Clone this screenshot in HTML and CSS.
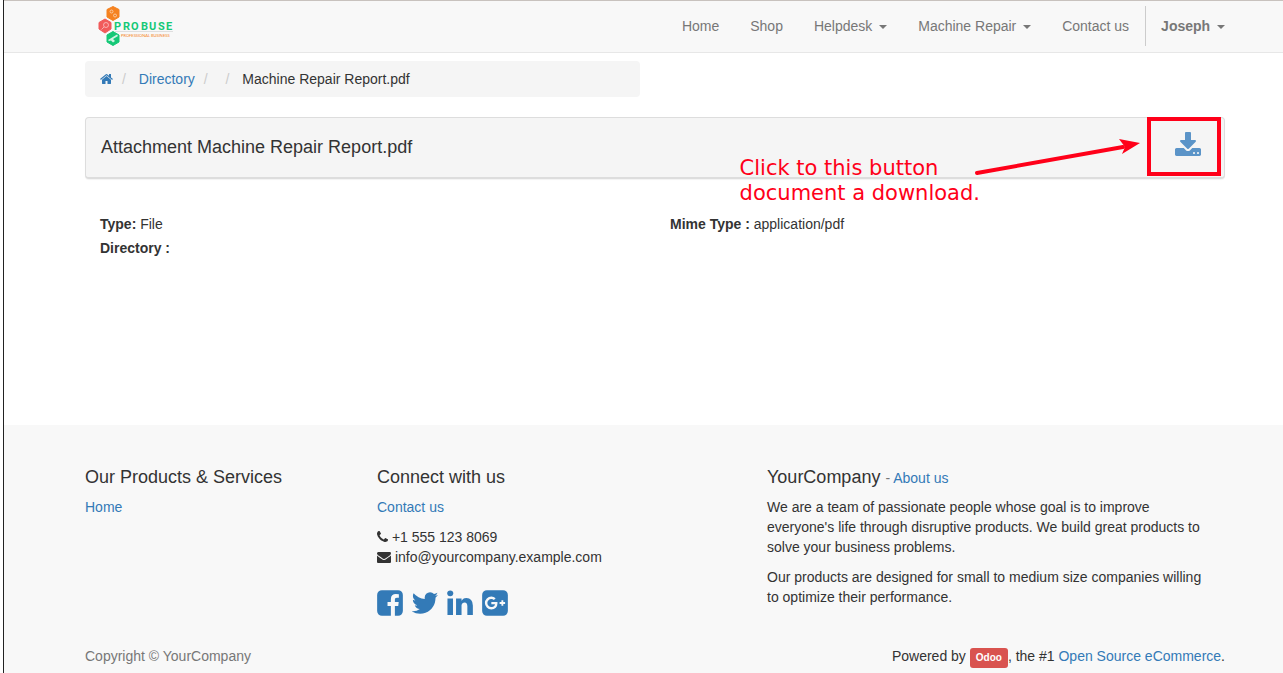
FILE: index.html
```html
<!DOCTYPE html>
<html lang="en">
<head>
<meta charset="utf-8">
<title>Machine Repair Report.pdf</title>
<link rel="stylesheet" href="styles.css">
</head>
<body>
<div class="page">
  <header class="navbar">
    <a class="brand" href="#" aria-label="Probuse">
      <svg class="logo" width="76" height="42" viewBox="0 0 76 42">
        <path fill="#f58220" stroke="#f58220" stroke-linejoin="round" d="M15 1.500L21 4.500V12L15 15.500L9 12V4.500Z"/>
        <path fill="#f15b5b" stroke="#f15b5b" stroke-linejoin="round" d="M7 14L13 17.500V24L7 28L1 24V17.500Z"/>
        <path fill="#15c877" stroke="#15c877" stroke-linejoin="round" d="M15 26.500L21 30V37L15 40.500L9 37V30Z"/>
        <g fill="none" stroke="#fff" stroke-opacity=".5">
          <circle cx="13.500" cy="6.500" r="1.500"/><circle cx="17" cy="10.500" r="1.500"/>
          <circle cx="8" cy="20" r="2.500"/><path d="M6 22L3.500 24.500"/>
        </g>
        <path fill="#fff" fill-opacity=".8" d="M10 35L19 29.500L20 31L15 34L17 36L15 37.500L13 35.500L11 36Z"/>
        <path stroke="#ccc" stroke-width=".6" d="M17 26.500H75"/>
        <text class="logo-name" x="16 25 33 43 51 60 68" y="25">PROBUSE</text>
        <text class="logo-tag" x="23" y="32">PROFESSIONAL BUSINESS</text>
      </svg>
    </a>
    <nav class="menu">
      <a href="#">Home</a>
      <a href="#">Shop</a>
      <a href="#">Helpdesk <span class="caret"></span></a>
      <a href="#">Machine Repair <span class="caret"></span></a>
      <a href="#">Contact us</a>
      <a class="user" href="#"><b>Joseph</b> <span class="caret"></span></a>
    </nav>
  </header>

  <main class="content">
    <ol class="breadcrumb">
      <li><a href="#" aria-label="Home"><svg class="icon-home" viewBox="64 0 1664 1792"><path d="M1472 992v480q0 26-19 45t-45 19h-384v-384h-256v384h-384q-26 0-45-19t-19-45v-480q0-1 .5-3t.5-3l575-474 575 474q1 2 1 6zm223-69l-62 74q-8 9-21 11h-3q-13 0-21-7l-692-577-692 577q-12 8-24 7-13-2-21-11l-62-74q-8-10-7-23.500t11-21.500l719-599q32-26 76-26t76 26l244 204v-195q0-14 9-23t23-9h192q14 0 23 9t9 23v408l219 182q10 8 11 21.500t-7 23.500z"/></svg></a></li>
      <li><a href="#">Directory</a></li>
      <li class="empty"></li>
      <li>Machine Repair Report.pdf</li>
    </ol>

    <section class="panel">
      <h1>Attachment Machine Repair Report.pdf</h1>
      <a class="download" href="#" aria-label="Download"><svg viewBox="64 0 1664 1792"><path d="M1344 1344q0-26-19-45t-45-19-45 19-19 45 19 45 45 19 45-19 19-45zm256 0q0-26-19-45t-45-19-45 19-19 45 19 45 45 19 45-19 19-45zm128-224v320q0 40-28 68t-68 28h-1472q-40 0-68-28t-28-68v-320q0-40 28-68t68-28h465l135 136q58 56 136 56t136-56l136-136h464q40 0 68 28t28 68zm-325-569q17 41-14 70l-448 448q-18 19-45 19t-45-19l-448-448q-31-29-14-70 17-39 59-39h256v-448q0-26 19-45t45-19h256q26 0 45 19t19 45v448h256q42 0 59 39z"/></svg></a>
      <div class="callout-box"></div>
      <svg class="callout-arrow" width="168" height="44" viewBox="0 0 168 44">
        <path fill="none" stroke="#ff0019" stroke-width="4" stroke-linecap="round" d="M4 37L150 11"/>
        <path fill="#ff0019" d="M167 7L149 18L152 11L146 3Z"/>
      </svg>
      <p class="callout-text">Click to this button<br>document a download.</p>
    </section>

    <div class="details">
      <div><p><b>Type:</b> File</p><p><b>Directory :</b></p></div>
      <div><p><b>Mime Type :</b> application/pdf</p></div>
    </div>
  </main>

  <footer class="footer">
    <div class="columns">
      <section>
        <h2>Our Products &amp; Services</h2>
        <p><a href="#">Home</a></p>
      </section>
      <section>
        <h2>Connect with us</h2>
        <p><a href="#">Contact us</a></p>
        <p>
          <svg class="icon-phone" viewBox="192 0 1408 1792"><path d="M1600 1240q0 27-10 70.500t-21 68.500q-21 50-122 106-94 51-186 51-27 0-53-3.500t-57.500-12.500-47-14.500-55.500-20.500-49-18q-98-35-175-83-127-79-264-216t-216-264q-48-77-83-175-3-9-18-49t-20.500-55.500-14.500-47-12.500-57.500-3.500-53q0-92 51-186 56-101 106-122 25-11 68.500-21t70.500-10q14 0 21 3 18 6 53 76 11 19 30 54t35 63.500 31 53.500q3 4 17.500 25t21.500 35.500 7 28.500q0 20-28.500 50t-62 55-62 53-28.500 46q0 9 5 22.500t8.500 20.500 14 24 11.500 19q76 137 174 235t235 174q2 1 19 11.500t24 14 20.500 8.500 22.500 5q18 0 46-28.500t53-62 55-62 50-28.500q14 0 28.500 7t35.500 21.500 25 17.500q25 15 53.500 31t63.500 35 54 30q70 35 76 53 3 7 3 21z"/></svg>
          +1 555 123 8069<br>
          <svg class="icon-mail" viewBox="0 0 1792 1792"><path d="M1792 710v794q0 66-47 113t-113 47h-1472q-66 0-113-47t-47-113v-794q44 49 101 87 362 246 497 345 57 42 92.500 65.500t94.500 48 110 24.500h2q51 0 110-24.500t94.500-48 92.500-65.500q170-123 498-345 57-39 100-87zm0-294q0 79-49 151t-122 123q-376 261-468 325-10 7-42.500 31t-54 38.500-52 32.500-57.500 27-50 9h-2q-23 0-50-9t-57.500-27-52-32.500-54-38.500-42.500-31q-91-64-262-182.500t-205-142.500q-62-42-117-115.500t-55-136.500q0-78 41.500-130t118.500-52h1472q65 0 112.500 47t47.500 113z"/></svg>
          info@yourcompany.example.com
        </p>
        <div class="social">
          <a href="#" aria-label="Facebook"><svg viewBox="128 0 1536 1792"><path d="M1376 128q119 0 203.500 84.500t84.500 203.500v960q0 119-84.500 203.500t-203.500 84.500h-188v-595h199l30-232h-229v-148q0-56 23.500-84t91.500-28l122-1v-207q-63-9-178-9-136 0-217.500 80t-81.500 226v171h-200v232h200v595h-532q-119 0-203.500-84.500t-84.500-203.500v-960q0-119 84.500-203.500t203.500-84.500h960z"/></svg></a>
          <a href="#" aria-label="Twitter"><svg viewBox="128 0 1536 1792"><path d="M1684 408q-67 98-162 167 1 14 1 42 0 130-38 259.500t-115.500 248.500-184.500 210.500-258 146-323 54.500q-271 0-496-145 35 4 78 4 225 0 401-138-105-2-188-64.500t-114-159.500q33 5 61 5 43 0 85-11-112-23-185.500-111.500t-73.500-205.500v-4q68 38 146 41-66-44-105-115t-39-154q0-88 44-163 121 149 294.500 238.500t371.500 99.500q-8-38-8-74 0-134 94.500-228.500t228.500-94.500q140 0 236 102 109-21 205-78-37 115-142 178 93-10 186-50z"/></svg></a>
          <a href="#" aria-label="LinkedIn"><svg viewBox="128 0 1536 1792"><path d="M477 625v991h-330v-991h330zm21-306q1 73-50.500 122t-135.500 49h-2q-82 0-132-49t-50-122q0-74 51.500-122.500t134.500-48.500 133 48.500 51 122.500zm1166 729v568h-329v-530q0-105-40.500-164.500t-126.500-59.500q-63 0-105.500 34.500t-63.500 85.500q-11 30-11 81v553h-329q2-399 2-647t-1-296l-1-48h329v144h-2q20-32 41-56t56.500-52 87-43.500 114.500-15.500q171 0 275 113.500t104 332.500z"/></svg></a>
          <a href="#" aria-label="Google Plus"><svg viewBox="128 0 1536 1792"><path d="M1045 905q0-26-6-64h-362v132h217q-3 24-16.500 50t-37.500 53-66.500 44.500-96.500 17.500q-99 0-169-71t-70-171 70-171 169-71q92 0 153 59l104-101q-108-100-257-100-160 0-272 112.500t-112 271.500 112 271.500 272 112.500q165 0 266.500-105t101.500-270zm345 46h109v-110h-109v-110h-110v110h-110v110h110v110h110v-110zm274-535v960q0 119-84.500 203.500t-203.500 84.500h-960q-119 0-203.500-84.500t-84.500-203.500v-960q0-119 84.500-203.500t203.500-84.500h960q119 0 203.500 84.500t84.500 203.500z"/></svg></a>
        </div>
      </section>
      <section class="about">
        <h2>YourCompany <small>- <a href="#">About us</a></small></h2>
        <p>We are a team of passionate people whose goal is to improve everyone's life through disruptive products. We build great products to solve your business problems.</p>
        <p>Our products are designed for small to medium size companies willing to optimize their performance.</p>
      </section>
    </div>
    <div class="legal">
      <span class="copyright">Copyright © YourCompany</span>
      <span>Powered by <a class="label" href="#">Odoo</a>, the #1 <a href="#">Open Source eCommerce</a>.</span>
    </div>
  </footer>
</div>
</body>
</html>
```
FILE: styles.css
```css
* { box-sizing: border-box; }

body {
  margin: 0;
  background: #fff;
  color: #333;
  font: 14px/20px "Liberation Sans", Arial, sans-serif;
}

h1, h2, p, ol { margin: 0; padding: 0; font-weight: normal; }
h1, h2 { font-size: 18px; line-height: 20px; }
a { color: #337ab7; text-decoration: none; }
svg { fill: currentColor; }

.page {
  display: flex;
  flex-direction: column;
  min-height: 100vh;
  margin-left: 3px;
  border-left: 1px solid #222;
}

.navbar {
  display: flex;
  align-items: flex-end;
  justify-content: space-between;
  padding: 4px 58px 5px 94px;
  border-top: 1px solid #c8c2be;
  border-bottom: 1px solid #e7e7e7;
  background: #f8f8f8;
}
.brand, .logo { display: block; }
.logo-name { font: bold 11px Roboto, sans-serif; fill: #15c877; }
.logo-tag { font: 4px Lato, sans-serif; fill: #f58220; }

.menu { display: flex; gap: 1px; height: 41px; }
.menu a { padding: 10px 15px; color: #777; }
.menu .user {
  height: 40px;
  padding-right: 0;
  border-left: 1px solid #ccc;
}
.caret {
  display: inline-block;
  margin-left: 3px;
  vertical-align: middle;
  border-top: 4px solid;
  border-left: 4px solid transparent;
  border-right: 4px solid transparent;
}

.content { padding: 8px 58px 165px 81px; }

.breadcrumb {
  display: flex;
  gap: 4px;
  width: 50%;
  max-width: 555px;
  margin-bottom: 20px;
  padding: 8px 15px;
  border-radius: 4px;
  background: #f5f5f5;
  list-style: none;
}
.breadcrumb li + li::before {
  content: "/\00a0";
  padding: 0 5px;
  margin-right: 4px;
  color: #ccc;
}
.breadcrumb .empty::before { margin-right: 0; }
.icon-home { width: 13px; height: 14px; vertical-align: -2px; }

.panel {
  position: relative;
  display: flex;
  align-items: center;
  justify-content: space-between;
  padding: 12px 23px 14px 15px;
  border: 1px solid #ddd;
  border-bottom-width: 2px;
  border-radius: 4px;
  background: #f5f5f5;
  box-shadow: 0 1px 1px rgba(0, 0, 0, .05);
}
.download { padding: 2px 0 3px; color: #5b94c8; }
.download svg { display: block; width: 26px; height: 28px; }

.callout-box {
  position: absolute;
  top: -1px;
  right: 3px;
  width: 74px;
  height: 59px;
  border: 4px solid #ff0019;
  pointer-events: none;
}
.callout-arrow { position: absolute; top: 18px; right: 83px; }
.callout-text {
  position: absolute;
  top: 38px;
  right: 244px;
  color: #ff0019;
  font: 21px/25px "DejaVu Sans", sans-serif;
  white-space: nowrap;
}

.details {
  display: grid;
  grid-template-columns: 1fr 1fr;
  margin-top: 33px;
  line-height: 24px;
}
.details > div { padding-left: 15px; }

.footer {
  flex: 1;
  padding: 42px 58px 7px 81px;
  background: #f8f8f8;
}
.columns {
  display: grid;
  grid-template-columns: 292px 390px 1fr;
}
.columns p { margin-top: 10px; }
.columns small { color: #777; font-size: 14px; line-height: 14px; }
.about p { max-width: 445px; }
.icon-phone { width: 11px; height: 14px; vertical-align: -2px; }
.icon-mail { width: 14px; height: 14px; vertical-align: -2px; }
.social { display: flex; gap: 9px; margin-top: 21px; }
.social svg { display: block; width: 26px; height: 30px; }

.legal {
  display: flex;
  justify-content: space-between;
  margin-top: 28px;
}
.copyright { color: #777; }
.label {
  display: inline-block;
  padding: 0 6px;
  border-radius: 3px;
  background: #d9534f;
  color: #fff;
  font-size: 10px;
  font-weight: bold;
  line-height: 20px;
}
```
